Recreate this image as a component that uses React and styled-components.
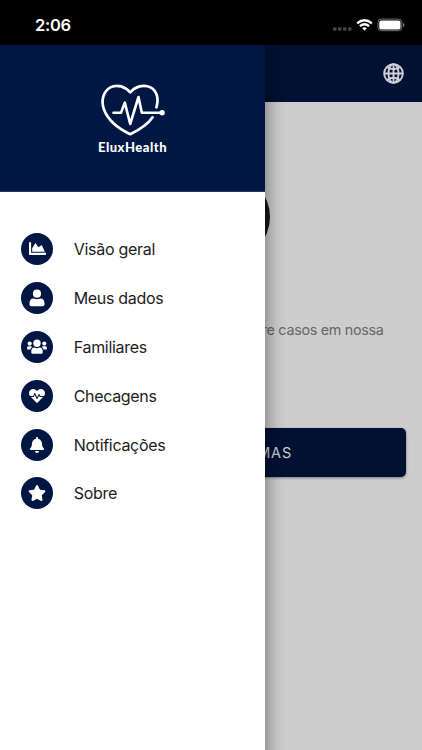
import React from "react";
import styled, { createGlobalStyle } from "styled-components";
import { FaChartArea, FaHeartbeat, FaBell, FaStar } from "react-icons/fa";
import { IoGlobeOutline } from "react-icons/io5";

const GlobalStyle = createGlobalStyle`
  *, *::before, *::after { box-sizing: border-box; }
  body { margin: 0; background: #000; font-family: Inter, "Liberation Sans", sans-serif; }
`;

const Screen = styled.div`
  position: relative;
  display: flex;
  flex-direction: column;
  width: 422px;
  height: 750px;
  overflow: hidden;
`;

const StatusBar = styled.header`
  display: flex;
  flex: none;
  align-items: center;
  justify-content: space-between;
  height: 45px;
  padding: 6px 16px 0 35px;
  background: #000;
  color: #fff;
`;

const Clock = styled.span`
  margin-top: -1px;
  font-size: 16.5px;
  font-weight: 600;
  line-height: 20px;
  letter-spacing: -0.3px;
`;

const Page = styled.main`
  display: flex;
  flex: 1;
  flex-direction: column;
  background: #cdcdcd;
`;

const AppBar = styled.div`
  display: flex;
  align-items: center;
  justify-content: flex-end;
  height: 57px;
  padding-right: 17px;
  background: #001133;
  color: #d0d1d8;
`;

const Globe = styled(IoGlobeOutline)`
  && * { stroke-width: 42px; }
`;

const Content = styled.section`
  display: flex;
  flex-direction: column;
  padding: 72px 16.5px 0;
`;

const Dot = styled.div`
  width: 86px;
  height: 86px;
  margin-left: 167.5px;
  border-radius: 50%;
  background: #171717;
`;

const Message = styled.p`
  margin: 58px 22px 0 0;
  color: #666;
  font-size: 14.3px;
  line-height: 24px;
  letter-spacing: -0.28px;
  text-align: right;
`;

const Action = styled.button`
  height: 49px;
  margin-top: 86px;
  padding: 0 113.5px 0 0;
  border: 0;
  border-radius: 5px;
  background: #001133;
  box-shadow: 0 1px 3px rgba(0, 0, 0, 0.4);
  color: #cdcdd4;
  font-family: inherit;
  font-size: 14.5px;
  letter-spacing: 0.8px;
  text-align: right;
`;

const Drawer = styled.aside`
  position: absolute;
  top: 45px;
  bottom: -40px;
  left: 0;
  width: 265px;
  background: #fff;
  box-shadow: 3px 0 16px rgba(0, 0, 0, 0.38);
  clip-path: inset(0 -40px 0 0);
`;

const Brand = styled.div`
  display: flex;
  flex-direction: column;
  align-items: center;
  height: 147px;
  padding-top: 38px;
  border-bottom: 1px solid #27375c;
  background: #001743;
  color: #fff;
`;

const BrandName = styled.span`
  margin-top: 2px;
  font-family: Lato, sans-serif;
  font-size: 13px;
  font-weight: 900;
  line-height: 16px;
  letter-spacing: 0.5px;
`;

const Menu = styled.nav`
  display: flex;
  flex-direction: column;
  padding: 32.5px 0 0 21px;
`;

const MenuItem = styled.a`
  display: flex;
  align-items: center;
  gap: 20.7px;
  height: 48.9px;
  color: #1c1c1c;
  font-size: 16px;
  letter-spacing: ${({ $spacing }) => $spacing}px;
`;

const IconDisc = styled.span`
  display: grid;
  flex: none;
  place-items: center;
  width: 32px;
  height: 32px;
  border-radius: 50%;
  background: #001743;
  color: #fff;
`;

function PersonIcon({ size }) {
  return (
    <svg width={size} height={size} viewBox="0 0 18 18" fill="currentColor">
      <circle cx="9" cy="4.7" r="4.1" />
      <path d="M5.6 9.5Q9 11 12.4 9.5C15.2 9.5 16.5 11.4 16.5 14.2V15.8Q16.5 17.2 15 17.2H3Q1.5 17.2 1.5 15.8V14.2C1.5 11.4 2.8 9.5 5.6 9.5Z" />
    </svg>
  );
}

function GroupIcon({ size }) {
  return (
    <svg width={size} height={size} viewBox="0 0 22 22" fill="currentColor">
      <circle cx="3.7" cy="7.6" r="2.1" />
      <circle cx="18.3" cy="7.6" r="2.1" />
      <path d="M2.5 10.3H4.8Q5.8 10.3 6.4 11C5.1 11.7 4.6 12.5 4.4 13.6H2Q1 13.6 1 12.6V12Q1 10.3 2.5 10.3ZM19.5 10.3H17.2Q16.2 10.3 15.6 11C16.9 11.7 17.4 12.5 17.6 13.6H20Q21 13.6 21 12.6V12Q21 10.3 19.5 10.3Z" />
      <circle cx="11" cy="7.2" r="3.7" />
      <path d="M8.5 11.6Q11 12.7 13.5 11.6C15.7 11.6 16.7 13.2 16.7 15.3V16.5Q16.7 17.8 15.4 17.8H6.6Q5.3 17.8 5.3 16.5V15.3C5.3 13.2 6.3 11.6 8.5 11.6Z" />
    </svg>
  );
}

const items = [
  { label: "Visão geral", Icon: FaChartArea, size: 17, spacing: -0.28 },
  { label: "Meus dados", Icon: PersonIcon, size: 18, spacing: -0.32 },
  { label: "Familiares", Icon: GroupIcon, size: 22, spacing: -0.3 },
  { label: "Checagens", Icon: FaHeartbeat, size: 16, spacing: -0.33 },
  { label: "Notificações", Icon: FaBell, size: 16, spacing: -0.3 },
  { label: "Sobre", Icon: FaStar, size: 18, spacing: -0.3 },
];

function StatusIcons() {
  return (
    <svg width="74" height="16" viewBox="0 0 74 16" fill="none">
      <g fill="#454545">
        <rect x="1" y="9.3" width="3.5" height="3.5" rx="1" />
        <rect x="6" y="9.3" width="3.5" height="3.5" rx="1" />
        <rect x="11" y="9.3" width="3.5" height="3.5" rx="1" />
        <rect x="16" y="9.3" width="3.5" height="3.5" rx="1" />
      </g>
      <g stroke="#fff" strokeWidth="2.3">
        <path d="M25.1 5.4Q32.5 -.9 39.9 5.4" />
        <path d="M27.9 8.2Q32.5 4.2 37.1 8.2" />
      </g>
      <path d="M30.1 10.1Q32.5 8.2 34.9 10.1L32.5 12.7Z" fill="#fff" />
      <rect x="46" y="1.1" width="23.8" height="11.6" rx="3.4" stroke="#737373" />
      <rect x="47.3" y="2.4" width="21.2" height="9" rx="2" fill="#fff" />
      <path d="M71 5v4q1.6-.5 1.6-2T71 5Z" fill="#737373" />
    </svg>
  );
}

function HeartLogo() {
  return (
    <svg width="66" height="54" viewBox="0 0 66 54" fill="none" stroke="#fff" strokeLinecap="round" strokeLinejoin="round">
      <path strokeWidth="2.7" d="M56.4 24.3C59 15.8 57 7.8 50.5 4.4C43.5.8 35.3 3.6 30.2 9.3C25.2 3.6 17.2.8 10.4 4.4C2.8 8.6 1 18 3.9 26.3C7.8 37 18.5 45.8 30.2 51.2C39.2 47 47.7 41.4 52.6 34.3" />
      <path strokeWidth="2.6" d="M13.5 29.7H21L24.8 19.6L30.2 41L38.5 14L41.8 29.7H61" />
      <circle cx="62.1" cy="29.7" r="2.7" fill="#fff" stroke="none" />
    </svg>
  );
}

export default function App() {
  return (
    <>
      <GlobalStyle />
      <Screen>
        <StatusBar>
          <Clock>2:06</Clock>
          <StatusIcons />
        </StatusBar>
        <Page>
          <AppBar>
            <Globe size={23} />
          </AppBar>
          <Content>
            <Dot />
            <Message>sobre casos em nossa</Message>
            <Action>SINTOMAS</Action>
          </Content>
        </Page>
        <Drawer>
          <Brand>
            <HeartLogo />
            <BrandName>EluxHealth</BrandName>
          </Brand>
          <Menu>
            {items.map(({ label, Icon, size, spacing }) => (
              <MenuItem key={label} $spacing={spacing}>
                <IconDisc>
                  <Icon size={size} />
                </IconDisc>
                {label}
              </MenuItem>
            ))}
          </Menu>
        </Drawer>
      </Screen>
    </>
  );
}
